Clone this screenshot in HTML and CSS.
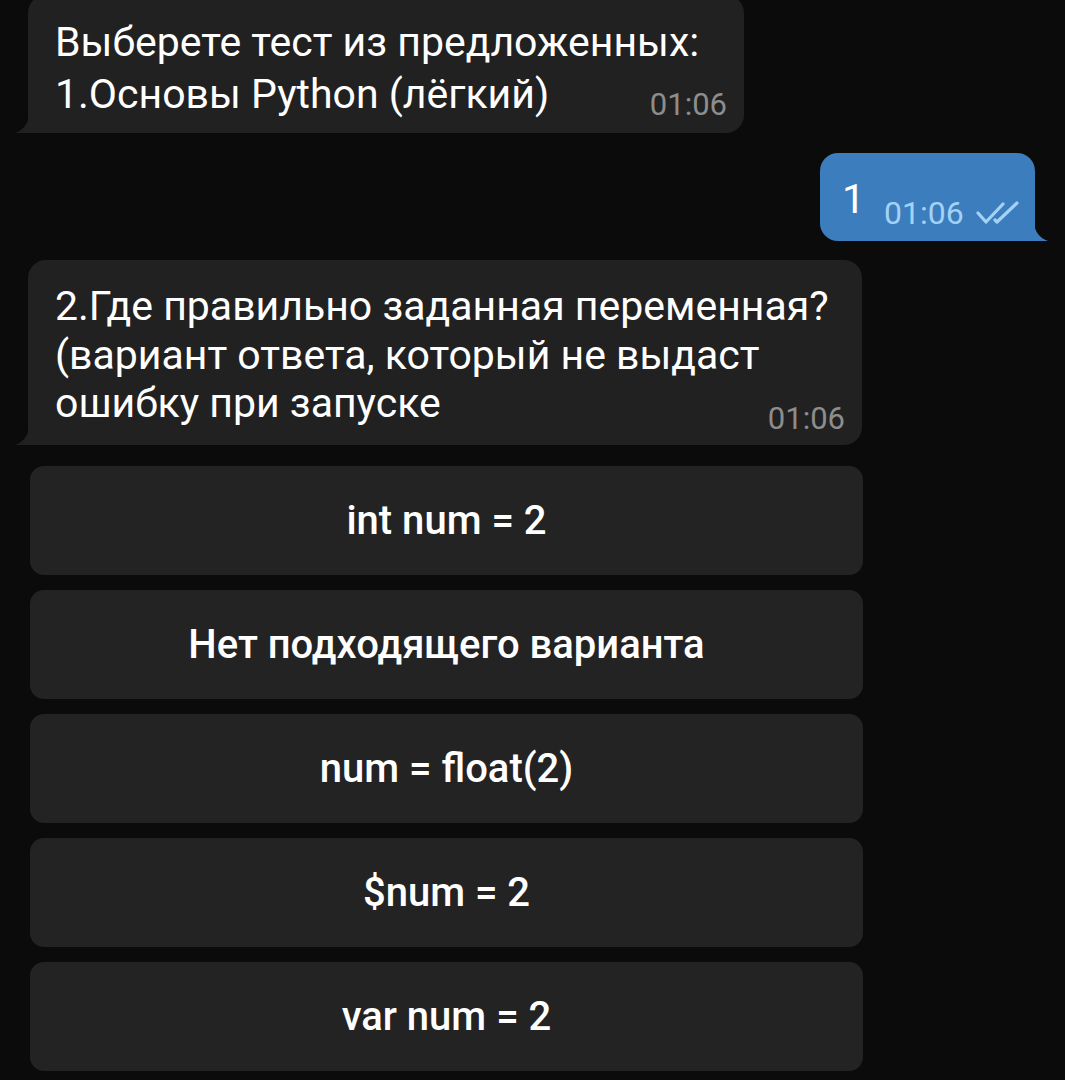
FILE: index.html
```html
<!DOCTYPE html>
<html lang="ru">
<head>
<meta charset="utf-8">
<link rel="stylesheet" href="styles.css">
</head>
<body>
<div class="chat">
  <div class="row in">
    <div class="bubble in-bubble b1">
      <div class="text">Выберете тест из предложенных:<br>1.Основы Python (лёгкий)<span class="spacer"></span></div>
      <span class="time">01:06</span>
      <svg class="tail tail-left" viewBox="0 0 14 20" width="14" height="20"><path d="M14 0 C14 11 8 17 0 20 L14 20 Z"/></svg>
    </div>
  </div>
  <div class="row out">
    <div class="bubble out-bubble">
      <span class="text">1</span>
      <span class="meta">
        <span class="time out-time">01:06</span>
        <svg class="checks" viewBox="0 0 44 24" width="44" height="24"><path d="M2 12 L10 21 L27 3 M19 19 L21 21 L41 2" fill="none" stroke="#a4d2f6" stroke-width="3.2" stroke-linecap="round" stroke-linejoin="round"/></svg>
      </span>
      <svg class="tail tail-right" viewBox="0 0 14 20" width="14" height="20"><path d="M0 0 C0 11 6 17 14 20 L0 20 Z"/></svg>
    </div>
  </div>
  <div class="row in">
    <div class="bubble in-bubble b3">
      <div class="text">2.Где правильно заданная переменная?<br>(вариант ответа, который не выдаст<br>ошибку при запуске<span class="spacer"></span></div>
      <span class="time">01:06</span>
      <svg class="tail tail-left" viewBox="0 0 14 20" width="14" height="20"><path d="M14 0 C14 11 8 17 0 20 L14 20 Z"/></svg>
    </div>
  </div>
  <div class="keyboard">
    <div class="key">int num = 2</div>
    <div class="key">Нет подходящего варианта</div>
    <div class="key">num = float(2)</div>
    <div class="key">$num = 2</div>
    <div class="key">var num = 2</div>
  </div>
</div>
</body>
</html>
```
FILE: styles.css
```css
html, body {
  margin: 0;
  padding: 0;
  background: #0b0b0b;
}
body {
  font-family: Roboto, "Noto Sans", sans-serif;
  color: #ffffff;
  width: 1065px;
  height: 1080px;
  overflow: hidden;
}
.chat {
  display: flex;
  flex-direction: column;
  padding: 0 15px 0 28px;
}
.row {
  display: flex;
}
.row.out {
  justify-content: flex-end;
}
.bubble {
  position: relative;
  border-radius: 18px;
}
.in-bubble {
  background: #212121;
  border-bottom-left-radius: 0;
  font-size: 41px;
  box-sizing: border-box;
}
.b1 {
  width: 716px;
  margin-top: -5px;
  padding: 21px 17px 13px 27px;
  line-height: 52px;
}
.b3 {
  width: 834px;
  margin-top: 19px;
  padding: 22px 17px 17px 27px;
  line-height: 48.5px;
}
.in-bubble .text {
  display: block;
}
.in-bubble .time {
  position: absolute;
  right: 17px;
  font-size: 31px;
  color: #8d8d8d;
  line-height: 34px;
}
.b1 .time {
  bottom: 11px;
}
.b3 .time {
  bottom: 9px;
}
.spacer {
  display: inline-block;
  width: 120px;
}
.out-bubble {
  background: #3c7dbd;
  border-bottom-right-radius: 0;
  margin-top: 20px;
  margin-right: 15px;
  height: 88px;
  width: 215px;
  box-sizing: border-box;
  padding: 22px 0 0 22px;
  display: flex;
  align-items: flex-start;
  gap: 19px;
}
.out-bubble .text {
  font-size: 41px;
  line-height: 48px;
}
.meta {
  display: flex;
  align-items: center;
  gap: 12px;
  margin-top: 21px;
}
.out-time {
  font-size: 32px;
  color: #a4d2f6;
  line-height: 34px;
}
.tail {
  position: absolute;
  bottom: 0;
}
.tail-left {
  left: -13px;
  fill: #212121;
}
.tail-right {
  right: -13px;
  fill: #3c7dbd;
}
.keyboard {
  display: flex;
  flex-direction: column;
  gap: 15px;
  width: 833px;
  margin-left: 2px;
  margin-top: 21px;
}
.key {
  background: #232323;
  border-radius: 14px;
  height: 109px;
  display: flex;
  align-items: center;
  justify-content: center;
  font-size: 40px;
  font-weight: 500;
  color: #ffffff;
}
```
